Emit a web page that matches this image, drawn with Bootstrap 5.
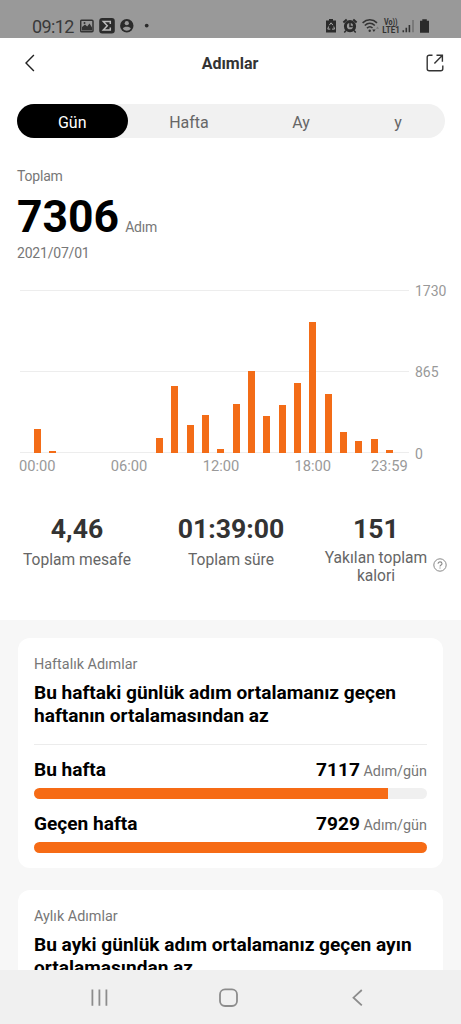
<!DOCTYPE html>
<html lang="tr">
<head>
  <meta charset="UTF-8" />
  <meta name="viewport" content="width=device-width, initial-scale=1">
  <title>Adımlar</title>
  <link href="https://cdn.jsdelivr.net/npm/bootstrap@5.3.0/dist/css/bootstrap.min.css" rel="stylesheet" />
  <style>
    body {
      font-family: Roboto, "Liberation Sans", sans-serif;
      color: #000;
      background: #f7f7f7;
    }

    svg {
      display: block;
      flex-shrink: 0;
    }

    .phone {
      height: 1024px;
    }

    .status-bar {
      height: 38px;
      padding: 14px 31px 0 32px;
      background: #999;
      color: #3a3a3a;
    }

    .clock {
      font-size: 18px;
      letter-spacing: -0.6px;
      line-height: 25px;
      width: 48px;
    }

    .title-bar {
      height: 50px;
      padding: 0 17px 0 24px;
    }

    .title-bar h1 {
      font-size: 16px;
      font-weight: 700;
      color: #333;
      padding: 2px 9px 0 0;
    }

    .tabs {
      height: 34px;
      margin: 16px 16px 0 16.5px;
      background: #f1f1f1;
      font-size: 16px;
      color: #666;
    }

    .tabs > div { padding-top: 3px; }
    .tab-day { width: 111.5px; background: #000; color: #fff; }
    .tab-week { width: 122px; }
    .tab-month { width: 102px; }
    .tab-year { width: 92px; }

    .total {
      padding: 28px 17px 0;
      color: #777;
      font-size: 14px;
      letter-spacing: -0.2px;
      line-height: 20px;
    }

    .total-number {
      font-size: 44.5px;
      letter-spacing: 0;
      line-height: 52px;
      font-weight: 700;
      color: #000;
    }

    .total-line {
      padding-top: 5px;
      height: 57px;
    }

    .unit {
      margin-left: 6px;
    }

    .chart {
      margin: 26.5px 0 0 20px;
      width: 441px;
      color: #999;
      font-size: 14.7px;
      line-height: 20px;
    }

    .plot {
      width: 389px;
      height: 163px;
      padding: 0 12px 0 9.5px;
      background:
        linear-gradient(#ededed, #ededed) 0 0 / 100% 1px no-repeat,
        linear-gradient(#ededed, #ededed) 0 81px / 100% 1px no-repeat,
        linear-gradient(#ededed, #ededed) 0 162px / 100% 1px no-repeat;
    }

    .scale {
      height: 183px;
      margin: -9px 0 -11px 6px;
      font-size: 14px;
    }

    .hours {
      width: 389px;
      padding: 3px 12px 0 9.5px;
    }

    .slot {
      flex: 1 1 0;
      width: 0;
    }

    .step-bar {
      width: 7px;
      background: #f36c17;
    }

    .stats {
      height: 144.5px;
      padding-top: 37.5px;
      color: #666;
      font-size: 15.6px;
      line-height: 18.5px;
    }

    .stats strong {
      display: block;
      font-size: 26.6px;
      line-height: 32px;
      color: #333;
    }

    .stat-distance { width: 154px; }
    .stat-time { width: 154px; }
    .stat-energy { width: 136px; }
    .one-line { padding-top: 5.5px; }
    .two-lines { padding-top: 3.5px; }

    .help {
      margin: 45px 0 0 -11px;
    }

    .averages {
      min-height: 0;
      padding-top: 17.5px;
    }

    .summary {
      margin: 0 18px 22px 17.5px;
      padding: 17px 16px 15px 16.5px;
      border-radius: 12px;
      background: #fff;
      font-size: 14.4px;
      color: #777;
    }

    .summary h2 {
      margin: 6px 0 17px;
      font-size: 19.1px;
      line-height: 23px;
      font-weight: 700;
      color: #000;
    }

    .summary .label-line {
      line-height: 20px;
    }

    .divider {
      height: 1px;
      background: #ececec;
      margin-bottom: 13px;
    }

    .avg-row {
      height: 24px;
      line-height: 24px;
    }

    .avg-row strong {
      font-size: 19.1px;
      color: #000;
    }

    .track {
      height: 11px;
      margin: 6px 0 13px;
      border-radius: 6px;
      background: #f0f0f0;
    }

    .track div {
      height: 100%;
      background: #f66b15;
    }

    .nav-keys {
      height: 54px;
      background: #f0f0f0;
      color: #8c8c8c;
    }
  </style>
</head>
<body>
  <div class="phone d-flex flex-column overflow-hidden">

    <!-- Status bar -->
    <div class="status-bar d-flex flex-shrink-0">
      <span class="clock">09:12</span>
      <svg width="70" height="24" viewBox="80 14 70 24">
        <rect x="80.7" y="20.2" width="12.3" height="11.6" rx="1" fill="none" stroke="#333" stroke-width="1.5"/>
        <path d="M82 30.5V27l3-2.5 2.2 2 2.3-3L92 27.5v3z" fill="#333"/>
        <circle cx="84.5" cy="23" r="1" fill="#333"/>
        <rect x="99.2" y="18" width="15.6" height="15.6" rx="3" fill="#2b2b2b"/>
        <path d="M110.3 24v-2.5h-7l4 4.3-4 4.2h7v-2.4" fill="none" stroke="#bbb" stroke-width="1.5"/>
        <circle cx="126.8" cy="25.8" r="6.7" fill="#2b2b2b"/>
        <circle cx="126.8" cy="23.2" r="2.1" fill="#999"/>
        <path d="M122.8 28.6c1-2.5 7-2.5 8 0-1 1.8-2.6 2.2-4 2.2s-3-.4-4-2.2z" fill="#999"/>
        <circle cx="146.7" cy="25.6" r="1.9" fill="#2b2b2b"/>
      </svg>
      <svg class="ms-auto" width="105" height="24" viewBox="325 14 105 24">
        <path d="M329 19h4v1.6h3v12h-10v-12h3z" fill="#2b2b2b"/>
        <path d="M329.3 25.2l1.8-2.4 1.8 2.4M333.8 26.5l.7 2.6h-2.5M330.3 29.1h-2.5l.8-2.6" fill="none" stroke="#aaa" stroke-width="1"/>
        <circle cx="350" cy="26.2" r="4.6" fill="none" stroke="#2b2b2b" stroke-width="3"/>
        <path d="M350 22.8v3.6h2.8M346 30.5l-1.7 2M354 30.5l1.7 2" fill="none" stroke="#2b2b2b" stroke-width="1.5"/>
        <path d="M343.4 22.4l3.3-3M356.6 22.4l-3.3-3" stroke="#2b2b2b" stroke-width="2"/>
        <path d="M362.6 22.8c4.3-4 10.2-4 14.4 0M364.8 25.5c3-2.8 7-2.8 10 0M367 28.2c1.8-1.7 4-1.7 5.5-.2" fill="none" stroke="#333" stroke-width="1.6"/>
        <circle cx="369.7" cy="30.7" r="1.2" fill="#333"/>
        <path d="M372.2 29.4h3.4l-1.7 2.7z" fill="#333"/>
        <path d="M376 28.8h3l-1.5-2.4z" fill="#777"/>
        <text x="384" y="24.6" font-size="8.5" font-weight="700" textLength="13.5" lengthAdjust="spacingAndGlyphs" fill="#333">Vo))</text>
        <text x="382.3" y="32.8" font-size="9" font-weight="700" textLength="17.5" lengthAdjust="spacingAndGlyphs" fill="#333">LTE1</text>
        <path d="M403.3 32.3v-2M406.3 32.3v-4.5M409.4 32.3V25" stroke="#333" stroke-width="1.6"/>
        <path d="M413 32.3V20" stroke="#6d6d6d" stroke-width="1.4"/>
        <path d="M422.3 19.2h4.5v1.6h2.2v12h-9v-12h2.3z" fill="#2b2b2b"/>
      </svg>
    </div>

    <div class="bg-white flex-shrink-0">
      <!-- Title -->
      <div class="title-bar d-flex align-items-center justify-content-between">
        <svg width="19" height="18" viewBox="0 0 19 18" fill="none" stroke="#222" stroke-width="1.4">
          <path d="M9.9 1L2 9l7.9 8"/>
        </svg>
        <h1 class="m-0">Adımlar</h1>
        <svg width="18" height="18" viewBox="0 0 18 18" fill="none" stroke="#333" stroke-width="1.4">
          <path d="M6.5 1.2H3.2a2 2 0 0 0-2 2v11.6a2 2 0 0 0 2 2h11.6a2 2 0 0 0 2-2v-3.4M10.5 1.2h5.9v6.6M16.2 1.4L8.4 9.5"/>
        </svg>
      </div>

      <!-- Period tabs -->
      <div class="tabs d-flex rounded-pill text-center align-items-stretch">
        <div class="tab-day rounded-pill d-flex align-items-center justify-content-center">Gün</div>
        <div class="tab-week d-flex align-items-center justify-content-center">Hafta</div>
        <div class="tab-month d-flex align-items-center justify-content-center">Ay</div>
        <div class="tab-year d-flex align-items-center justify-content-center">y</div>
      </div>

      <!-- Daily total -->
      <div class="total">
        <div>Toplam</div>
        <div class="total-line d-flex align-items-baseline">
          <span class="total-number">7306</span>
          <span class="unit">Adım</span>
        </div>
        <div>2021/07/01</div>
      </div>

      <!-- Steps per hour -->
      <div class="chart">
        <div class="d-flex">
          <div class="plot d-flex align-items-end" id="plot"></div>
          <div class="scale d-flex flex-column justify-content-between">
            <span>1730</span><span>865</span><span>0</span>
          </div>
        </div>
        <div class="hours d-flex" id="hours"></div>
      </div>

      <div class="stats d-flex text-center">
        <div class="stat-distance"><strong>4,46</strong><div class="one-line">Toplam mesafe</div></div>
        <div class="stat-time"><strong>01:39:00</strong><div class="one-line">Toplam süre</div></div>
        <div class="stat-energy"><strong>151</strong><div class="two-lines">Yakılan toplam<br>kalori</div></div>
        <svg class="help" width="14" height="14" viewBox="0 0 14 14" fill="none" stroke="#888">
          <circle cx="7" cy="7" r="6.2"/>
          <path d="M5.1 5.7c0-2.5 3.9-2.4 3.9 0 0 1.3-2 1.4-2 2.8M7 9.5v1.1" stroke-width="1.1"/>
        </svg>
      </div>
    </div>

    <!-- Averages -->
    <div class="averages flex-grow-1 overflow-hidden">
      <div class="summary">
        <div class="label-line">Haftalık Adımlar</div>
        <h2>Bu haftaki günlük adım ortalamanız geçen haftanın ortalamasından az</h2>
        <div class="divider"></div>
        <div class="avg-row d-flex justify-content-between">
          <strong>Bu hafta</strong>
          <span><strong>7117</strong> Adım/gün</span>
        </div>
        <div class="track overflow-hidden"><div style="width: 90%"></div></div>
        <div class="avg-row d-flex justify-content-between">
          <strong>Geçen hafta</strong>
          <span><strong>7929</strong> Adım/gün</span>
        </div>
        <div class="track overflow-hidden mb-0"><div style="width: 100%"></div></div>
      </div>
      <div class="summary">
        <div class="label-line">Aylık Adımlar</div>
        <h2>Bu ayki günlük adım ortalamanız geçen ayın ortalamasından az</h2>
      </div>
    </div>

    <!-- System keys -->
    <div class="nav-keys flex-shrink-0">
      <svg width="461" height="54" viewBox="0 0 461 54" fill="none" stroke="currentColor" stroke-width="1.8">
        <path d="M92.4 19.5v16.3M99.4 19.5v16.3M106.4 19.5v16.3"/>
        <rect x="220" y="19.4" width="17" height="16.6" rx="5"/>
        <path d="M361.8 20l-8.3 7.7 8.3 7.7"/>
      </svg>
    </div>
  </div>

  <script src="https://cdn.jsdelivr.net/npm/bootstrap@5.3.0/dist/js/bootstrap.bundle.min.js"></script>
  <script>
    const maxSteps = 1730;
    const steps = [245, 12, 0, 0, 0, 0, 0, 0, 150, 708, 287, 394, 33, 516, 862, 386, 508, 735, 1384, 623, 213, 125, 144, 32];
    const labels = { 0: "00:00", 6: "06:00", 12: "12:00", 18: "18:00", 23: "23:59" };

    const plot = document.getElementById("plot");
    const hours = document.getElementById("hours");

    steps.forEach((count, hour) => {
      plot.innerHTML += `
        <div class="slot h-100 d-flex align-items-end justify-content-center">
          <div class="step-bar" style="height: ${count / maxSteps * 100}%"></div>
        </div>`;
      hours.innerHTML += `<div class="slot d-flex justify-content-center">${labels[hour] || ""}</div>`;
    });
  </script>
</body>
</html>
